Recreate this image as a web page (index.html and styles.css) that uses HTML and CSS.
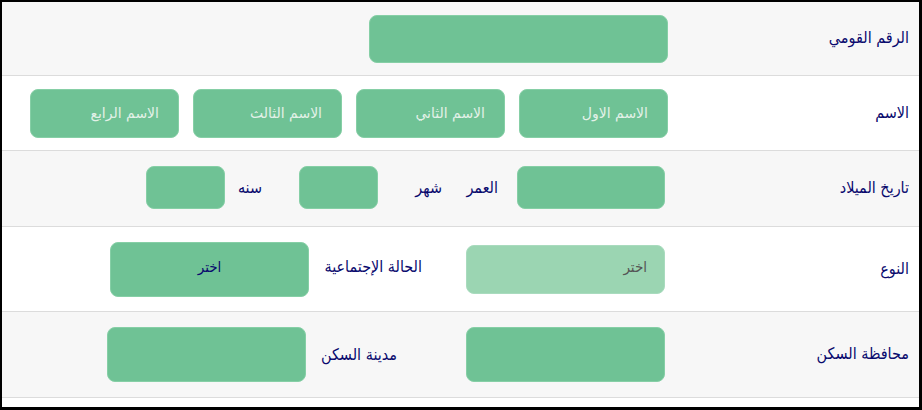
FILE: index.html
```html
<!DOCTYPE html>
<html lang="ar" dir="rtl">
<head>
<meta charset="utf-8">
<title>بيانات</title>
<link rel="stylesheet" href="styles.css">
</head>
<body>
<div class="frame">
  <div class="row row-1 odd">
    <div class="label">الرقم القومي</div>
    <div class="cells">
      <div class="field w299 h48"></div>
    </div>
  </div>
  <div class="row row-2">
    <div class="label">الاسم</div>
    <div class="cells names">
      <div class="field name">الاسم الاول</div>
      <div class="field name">الاسم الثاني</div>
      <div class="field name">الاسم الثالث</div>
      <div class="field name">الاسم الرابع</div>
    </div>
  </div>
  <div class="row row-3 odd">
    <div class="label">تاريخ الميلاد</div>
    <div class="cells inset">
      <div class="field w148 h43"></div>
      <span class="txt age">العمر</span>
      <span class="txt month">شهر</span>
      <div class="field w79 h43"></div>
      <span class="txt year">سنه</span>
      <div class="field w79 h43"></div>
    </div>
  </div>
  <div class="row row-4">
    <div class="label">النوع</div>
    <div class="cells inset">
      <div class="field select light w199 h49">اختر</div>
      <span class="txt social">الحالة الإجتماعية</span>
      <div class="field select dark w199 h55">اختر</div>
    </div>
  </div>
  <div class="row row-5 odd">
    <div class="label">محافظة السكن</div>
    <div class="cells inset">
      <div class="field w199 h55"></div>
      <span class="txt city">مدينة السكن</span>
      <div class="field w199 h55"></div>
    </div>
  </div>
</div>
</body>
</html>
```
FILE: styles.css
```css
html, body {
  margin: 0;
  padding: 0;
  background: #fff;
}
body {
  font-family: "DejaVu Sans Condensed", "DejaVu Sans", sans-serif;
  color: #0a0a6e;
}
.frame {
  box-sizing: border-box;
  width: 922px;
  height: 410px;
  border: 2px solid #000;
  border-right-width: 3px;
  border-bottom-width: 3px;
  overflow: hidden;
}
.row {
  display: flex;
  align-items: center;
  border-bottom: 1px solid #dcdcdc;
  background: #fff;
}
.row.odd { background: #f7f7f7; }
.row-1 { height: 73px; }
.row-2 { height: 74px; }
.row-3 { height: 75px; }
.row-4 { height: 84px; }
.row-5 { height: 85px; }

.label {
  width: 251px;
  padding-right: 10px;
  box-sizing: border-box;
  font-size: 16px;
  text-align: right;
  flex: none;
  margin-top: -2px;
}
.cells {
  display: flex;
  align-items: center;
}
.cells.inset { margin-right: 3px; }
.row-3 .cells { margin-top: -2px; }

.names { gap: 14px; }

.field {
  box-sizing: border-box;
  background: #6fc295;
  border: 1px solid #86cfa6;
  border-radius: 8px;
  flex: none;
}
.w299 { width: 299px; }
.w199 { width: 199px; }
.w148 { width: 148px; }
.w79 { width: 79px; }
.h48 { height: 48px; }
.h43 { height: 43px; }
.h49 { height: 49px; }
.h55 { height: 55px; }

.field.name {
  width: 149px;
  height: 49px;
  padding-right: 19px;
  padding-bottom: 1px;
  display: flex;
  align-items: center;
  font-family: "DejaVu Sans", sans-serif;
  font-size: 14px;
  color: #e3f1e8;
}

.field.select {
  display: flex;
  align-items: center;
  font-size: 15px;
  padding-bottom: 4px;
}
.field.select.light {
  background: #9bd5b2;
  border-color: #a9dbbe;
  padding-right: 17px;
  color: #555;
}
.field.select.dark {
  justify-content: center;
  color: #0a0a6e;
}

.txt {
  font-size: 16px;
  flex: none;
  white-space: nowrap;
}
.age { width: 28px; margin-right: 19px; }
.month { width: 26px; margin-right: 28px; margin-left: 38px; }
.year { width: 25px; margin-right: 37px; margin-left: 12px; }
.social { width: 108px; margin-right: 44px; margin-left: 5px; margin-top: -6px; }
.city { margin-right: 69px; margin-left: 15px; }
```
